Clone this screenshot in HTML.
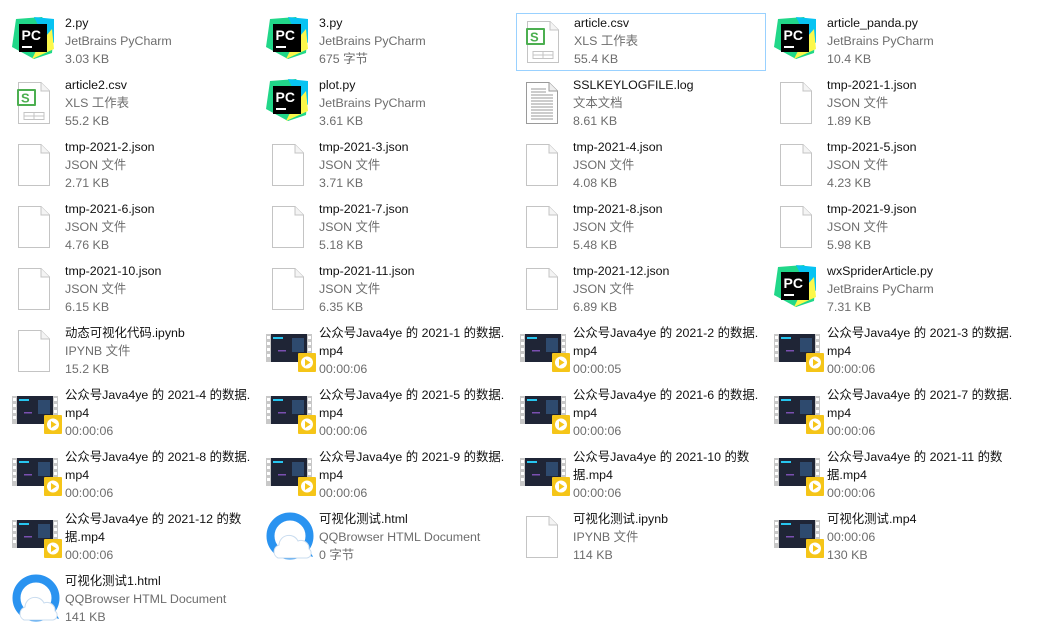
<!DOCTYPE html>
<html><head><meta charset="utf-8"><style>
body{margin:0;width:1050px;height:635px;background:#fff;position:relative;overflow:hidden;font-family:"Liberation Sans","Noto Sans CJK SC",sans-serif;font-size:12.4px;}
.it{position:absolute;width:250px;height:58px;}
.sel{border:1px solid #99d1ff;box-sizing:border-box;}
.t{position:absolute;left:53px;top:1px;line-height:18px;white-space:nowrap;color:#111;}
.t span{color:#6d6d6d;}
.ic{position:absolute;overflow:visible;}
</style></head><body>
<svg width="0" height="0" style="position:absolute">
<defs>
<symbol id="pc" viewBox="0 0 42 42">
<polygon points="4,2 30,0 42,14 40,36 22,42 0,30" fill="#21d789"/>
<polygon points="22,0 42,2 42,26 30,16" fill="#07c3f2"/>
<polygon points="20,42 42,32 40,12 28,26" fill="#fcf84a"/>
<rect x="7" y="7" width="28" height="28" fill="#000"/>
<text x="9.5" y="23" font-family="Liberation Sans" font-weight="bold" font-size="14" fill="#fff">PC</text>
<rect x="10" y="29" width="10" height="2" fill="#fff"/>
</symbol>
<symbol id="doc" viewBox="0 0 34 44">
<path d="M1.5 1.5H24L32.5 10V42.5H1.5Z" fill="#fff" stroke="#c4c4c4"/>
<path d="M24 1.5V10H32.5" fill="#f4f4f4" stroke="#c4c4c4"/>
</symbol>
<symbol id="csv" viewBox="0 0 34 44">
<path d="M1.5 1.5H24L32.5 10V42.5H1.5Z" fill="#fff" stroke="#c4c4c4"/>
<path d="M24 1.5V10H32.5" fill="#f4f4f4" stroke="#c4c4c4"/>
<rect x="0" y="8" width="19" height="17" rx="1" fill="#4caf50"/>
<rect x="2" y="10" width="15" height="13" fill="#fff"/>
<text x="4" y="21.5" font-family="Liberation Sans" font-weight="bold" font-size="13" fill="#4caf50">S</text>
<path d="M7 31.5H27V38.5H7ZM7 35H27M17 31.5V38.5" fill="none" stroke="#c4c4c4"/>
</symbol>
<symbol id="log" viewBox="0 0 34 44">
<path d="M1.5 1.5H24L32.5 10V42.5H1.5Z" fill="#fff" stroke="#9a9a9a"/>
<path d="M24 1.5V10H32.5" fill="#eee" stroke="#9a9a9a"/>
<path d="M6 8H21M6 11H21M6 14H28M6 17H28M6 20H28M6 23H28M6 26H28M6 29H28M6 32H28M6 35H28M6 38H28" stroke="#9a9a9a"/>
</symbol>
<symbol id="vid" viewBox="0 0 50 40">
<rect x="0" y="0" width="46" height="28" fill="#c8c8c8"/>
<rect x="5" y="0" width="36" height="28" fill="#1f2536"/>
<g fill="#fff"><rect x="1" y="2" width="3" height="3"/><rect x="1" y="8" width="3" height="3"/><rect x="1" y="14" width="3" height="3"/><rect x="1" y="20" width="3" height="3"/><rect x="42" y="2" width="3" height="3"/><rect x="42" y="8" width="3" height="3"/><rect x="42" y="14" width="3" height="3"/><rect x="42" y="20" width="3" height="3"/></g>
<rect x="7" y="3" width="10" height="2" fill="#27c6f0"/>
<rect x="26" y="4" width="12" height="14" fill="#2e4a6e"/>
<rect x="12" y="16" width="8" height="1.5" fill="#7a4fb0"/>
<rect x="32" y="19" width="18" height="19" rx="1" fill="#f5c518"/>
<circle cx="41" cy="28.5" r="6" fill="#fff"/>
<polygon points="39,25 39,32 44.5,28.5" fill="#f5c518"/>
</symbol>
<symbol id="qq" viewBox="0 0 48 48">
<circle cx="24" cy="24" r="19.5" fill="none" stroke="#2a93f0" stroke-width="8"/>
<path d="M40 30L47 45L32 40Z" fill="#2a93f0"/>
<path d="M12 46a7 7 0 0 1 1-13a10 10 0 0 1 19-4a8 8 0 0 1 11 8a5 5 0 0 1-2 9Z" fill="#fff" stroke="#c9dcef"/>
</symbol>
</defs></svg>

<div class="it" style="left:12px;top:13px"><svg class="ic" style="left:0;top:4px" width="42" height="42"><use href="#pc"/></svg><div class="t">2.py<br><span>JetBrains PyCharm</span><br><span>3.03 KB</span></div></div>
<div class="it" style="left:266px;top:13px"><svg class="ic" style="left:0;top:4px" width="42" height="42"><use href="#pc"/></svg><div class="t">3.py<br><span>JetBrains PyCharm</span><br><span>675 字节</span></div></div>
<div class="it sel" style="left:516px;top:13px"><svg class="ic" style="left:9px;top:6px" width="34" height="44"><use href="#csv"/></svg><div class="t" style="left:57px;top:0">article.csv<br><span>XLS 工作表</span><br><span>55.4 KB</span></div></div>
<div class="it" style="left:774px;top:13px"><svg class="ic" style="left:0;top:4px" width="42" height="42"><use href="#pc"/></svg><div class="t">article_panda.py<br><span>JetBrains PyCharm</span><br><span>10.4 KB</span></div></div>

<div class="it" style="left:12px;top:75px"><svg class="ic" style="left:5px;top:6px" width="34" height="44"><use href="#csv"/></svg><div class="t">article2.csv<br><span>XLS 工作表</span><br><span>55.2 KB</span></div></div>
<div class="it" style="left:266px;top:75px"><svg class="ic" style="left:0;top:4px" width="42" height="42"><use href="#pc"/></svg><div class="t">plot.py<br><span>JetBrains PyCharm</span><br><span>3.61 KB</span></div></div>
<div class="it" style="left:520px;top:75px"><svg class="ic" style="left:5px;top:6px" width="34" height="44"><use href="#log"/></svg><div class="t">SSLKEYLOGFILE.log<br><span>文本文档</span><br><span>8.61 KB</span></div></div>
<div class="it" style="left:774px;top:75px"><svg class="ic" style="left:5px;top:6px" width="34" height="44"><use href="#doc"/></svg><div class="t">tmp-2021-1.json<br><span>JSON 文件</span><br><span>1.89 KB</span></div></div>

<div class="it" style="left:12px;top:137px"><svg class="ic" style="left:5px;top:6px" width="34" height="44"><use href="#doc"/></svg><div class="t">tmp-2021-2.json<br><span>JSON 文件</span><br><span>2.71 KB</span></div></div>
<div class="it" style="left:266px;top:137px"><svg class="ic" style="left:5px;top:6px" width="34" height="44"><use href="#doc"/></svg><div class="t">tmp-2021-3.json<br><span>JSON 文件</span><br><span>3.71 KB</span></div></div>
<div class="it" style="left:520px;top:137px"><svg class="ic" style="left:5px;top:6px" width="34" height="44"><use href="#doc"/></svg><div class="t">tmp-2021-4.json<br><span>JSON 文件</span><br><span>4.08 KB</span></div></div>
<div class="it" style="left:774px;top:137px"><svg class="ic" style="left:5px;top:6px" width="34" height="44"><use href="#doc"/></svg><div class="t">tmp-2021-5.json<br><span>JSON 文件</span><br><span>4.23 KB</span></div></div>

<div class="it" style="left:12px;top:199px"><svg class="ic" style="left:5px;top:6px" width="34" height="44"><use href="#doc"/></svg><div class="t">tmp-2021-6.json<br><span>JSON 文件</span><br><span>4.76 KB</span></div></div>
<div class="it" style="left:266px;top:199px"><svg class="ic" style="left:5px;top:6px" width="34" height="44"><use href="#doc"/></svg><div class="t">tmp-2021-7.json<br><span>JSON 文件</span><br><span>5.18 KB</span></div></div>
<div class="it" style="left:520px;top:199px"><svg class="ic" style="left:5px;top:6px" width="34" height="44"><use href="#doc"/></svg><div class="t">tmp-2021-8.json<br><span>JSON 文件</span><br><span>5.48 KB</span></div></div>
<div class="it" style="left:774px;top:199px"><svg class="ic" style="left:5px;top:6px" width="34" height="44"><use href="#doc"/></svg><div class="t">tmp-2021-9.json<br><span>JSON 文件</span><br><span>5.98 KB</span></div></div>

<div class="it" style="left:12px;top:261px"><svg class="ic" style="left:5px;top:6px" width="34" height="44"><use href="#doc"/></svg><div class="t">tmp-2021-10.json<br><span>JSON 文件</span><br><span>6.15 KB</span></div></div>
<div class="it" style="left:266px;top:261px"><svg class="ic" style="left:5px;top:6px" width="34" height="44"><use href="#doc"/></svg><div class="t">tmp-2021-11.json<br><span>JSON 文件</span><br><span>6.35 KB</span></div></div>
<div class="it" style="left:520px;top:261px"><svg class="ic" style="left:5px;top:6px" width="34" height="44"><use href="#doc"/></svg><div class="t">tmp-2021-12.json<br><span>JSON 文件</span><br><span>6.89 KB</span></div></div>
<div class="it" style="left:774px;top:261px"><svg class="ic" style="left:0;top:4px" width="42" height="42"><use href="#pc"/></svg><div class="t">wxSpriderArticle.py<br><span>JetBrains PyCharm</span><br><span>7.31 KB</span></div></div>

<div class="it" style="left:12px;top:323px"><svg class="ic" style="left:5px;top:6px" width="34" height="44"><use href="#doc"/></svg><div class="t">动态可视化代码.ipynb<br><span>IPYNB 文件</span><br><span>15.2 KB</span></div></div>
<div class="it" style="left:266px;top:323px"><svg class="ic" style="left:0;top:11px" width="50" height="40"><use href="#vid"/></svg><div class="t">公众号Java4ye 的 2021-1 的数据.<br>mp4<br><span>00:00:06</span></div></div>
<div class="it" style="left:520px;top:323px"><svg class="ic" style="left:0;top:11px" width="50" height="40"><use href="#vid"/></svg><div class="t">公众号Java4ye 的 2021-2 的数据.<br>mp4<br><span>00:00:05</span></div></div>
<div class="it" style="left:774px;top:323px"><svg class="ic" style="left:0;top:11px" width="50" height="40"><use href="#vid"/></svg><div class="t">公众号Java4ye 的 2021-3 的数据.<br>mp4<br><span>00:00:06</span></div></div>

<div class="it" style="left:12px;top:385px"><svg class="ic" style="left:0;top:11px" width="50" height="40"><use href="#vid"/></svg><div class="t">公众号Java4ye 的 2021-4 的数据.<br>mp4<br><span>00:00:06</span></div></div>
<div class="it" style="left:266px;top:385px"><svg class="ic" style="left:0;top:11px" width="50" height="40"><use href="#vid"/></svg><div class="t">公众号Java4ye 的 2021-5 的数据.<br>mp4<br><span>00:00:06</span></div></div>
<div class="it" style="left:520px;top:385px"><svg class="ic" style="left:0;top:11px" width="50" height="40"><use href="#vid"/></svg><div class="t">公众号Java4ye 的 2021-6 的数据.<br>mp4<br><span>00:00:06</span></div></div>
<div class="it" style="left:774px;top:385px"><svg class="ic" style="left:0;top:11px" width="50" height="40"><use href="#vid"/></svg><div class="t">公众号Java4ye 的 2021-7 的数据.<br>mp4<br><span>00:00:06</span></div></div>

<div class="it" style="left:12px;top:447px"><svg class="ic" style="left:0;top:11px" width="50" height="40"><use href="#vid"/></svg><div class="t">公众号Java4ye 的 2021-8 的数据.<br>mp4<br><span>00:00:06</span></div></div>
<div class="it" style="left:266px;top:447px"><svg class="ic" style="left:0;top:11px" width="50" height="40"><use href="#vid"/></svg><div class="t">公众号Java4ye 的 2021-9 的数据.<br>mp4<br><span>00:00:06</span></div></div>
<div class="it" style="left:520px;top:447px"><svg class="ic" style="left:0;top:11px" width="50" height="40"><use href="#vid"/></svg><div class="t">公众号Java4ye 的 2021-10 的数<br>据.mp4<br><span>00:00:06</span></div></div>
<div class="it" style="left:774px;top:447px"><svg class="ic" style="left:0;top:11px" width="50" height="40"><use href="#vid"/></svg><div class="t">公众号Java4ye 的 2021-11 的数<br>据.mp4<br><span>00:00:06</span></div></div>

<div class="it" style="left:12px;top:509px"><svg class="ic" style="left:0;top:11px" width="50" height="40"><use href="#vid"/></svg><div class="t">公众号Java4ye 的 2021-12 的数<br>据.mp4<br><span>00:00:06</span></div></div>
<div class="it" style="left:266px;top:509px"><svg class="ic" style="left:0;top:3px" width="48" height="48"><use href="#qq"/></svg><div class="t">可视化测试.html<br><span>QQBrowser HTML Document</span><br><span>0 字节</span></div></div>
<div class="it" style="left:520px;top:509px"><svg class="ic" style="left:5px;top:6px" width="34" height="44"><use href="#doc"/></svg><div class="t">可视化测试.ipynb<br><span>IPYNB 文件</span><br><span>114 KB</span></div></div>
<div class="it" style="left:774px;top:509px"><svg class="ic" style="left:0;top:11px" width="50" height="40"><use href="#vid"/></svg><div class="t">可视化测试.mp4<br><span>00:00:06</span><br><span>130 KB</span></div></div>

<div class="it" style="left:12px;top:571px"><svg class="ic" style="left:0;top:3px" width="48" height="48"><use href="#qq"/></svg><div class="t">可视化测试1.html<br><span>QQBrowser HTML Document</span><br><span>141 KB</span></div></div>
</body></html>
